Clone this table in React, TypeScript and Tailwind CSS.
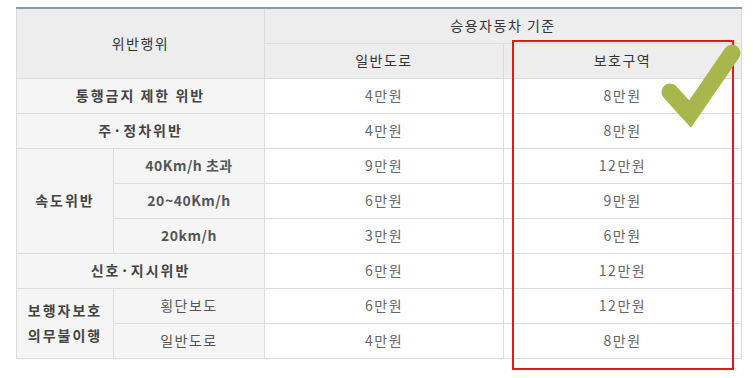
import React from "react";

const th = "border border-[#dcdcdc] bg-[#ededed] font-normal text-[#333]";
const label = "border border-[#dcdcdc] bg-[#f5f5f5] font-semibold tracking-[2px] text-[#444]";
const sub = "border border-[#dcdcdc] bg-[#f5f5f5] text-[#555]";
const val = "border border-[#dcdcdc] bg-white text-[14px] tracking-[1.5px] text-[#666]";

export default function App() {
  return (
    <div
      className="min-h-[378px] w-[753px] bg-white pl-4 pt-[7px] text-[14px] tracking-[1.5px]"
      style={{ fontFamily: '"Noto Sans CJK KR", "Noto Sans", sans-serif' }}
    >
      <div className="relative w-[725px]">
        <table className="w-full table-fixed border-collapse border-t-2 border-t-[#8a99ae] text-center">
          <colgroup>
            <col className="w-[97px]" />
            <col className="w-[151px]" />
            <col className="w-[239px]" />
            <col className="w-[238px]" />
          </colgroup>
          <thead>
            <tr className="h-[35px]">
              <th rowSpan={2} colSpan={2} className={th}>
                위반행위
              </th>
              <th colSpan={2} className={th}>
                승용자동차 기준
              </th>
            </tr>
            <tr className="h-[35px]">
              <th className={th}>일반도로</th>
              <th className={th}>보호구역</th>
            </tr>
          </thead>
          <tbody>
            <tr className="h-[35px]">
              <td colSpan={2} className={label}>통행금지 제한 위반</td>
              <td className={val}>4만원</td>
              <td className={val}>8만원</td>
            </tr>
            <tr className="h-[35px]">
              <td colSpan={2} className={label}>주·정차위반</td>
              <td className={val}>4만원</td>
              <td className={val}>8만원</td>
            </tr>
            <tr className="h-[35px]">
              <td rowSpan={3} className={label}>속도위반</td>
              <td className={`${sub} font-semibold tracking-[0.5px]`}>40Km/h 초과</td>
              <td className={val}>9만원</td>
              <td className={val}>12만원</td>
            </tr>
            <tr className="h-[35px]">
              <td className={`${sub} font-semibold tracking-[0.5px]`}>20~40Km/h</td>
              <td className={val}>6만원</td>
              <td className={val}>9만원</td>
            </tr>
            <tr className="h-[35px]">
              <td className={`${sub} font-semibold tracking-[0.5px]`}>20km/h</td>
              <td className={val}>3만원</td>
              <td className={val}>6만원</td>
            </tr>
            <tr className="h-[35px]">
              <td colSpan={2} className={label}>신호·지시위반</td>
              <td className={val}>6만원</td>
              <td className={val}>12만원</td>
            </tr>
            <tr className="h-[35px]">
              <td rowSpan={2} className={`${label} leading-[25px]`}>
                보행자보호
                <br />
                의무불이행
              </td>
              <td className={sub}>횡단보도</td>
              <td className={val}>6만원</td>
              <td className={val}>12만원</td>
            </tr>
            <tr className="h-[35px]">
              <td className={sub}>일반도로</td>
              <td className={val}>4만원</td>
              <td className={val}>8만원</td>
            </tr>
          </tbody>
        </table>

        <div className="pointer-events-none absolute left-[496px] top-[33px] h-[330px] w-[222px] border-2 border-[#e5161d]" />

        <svg
          className="pointer-events-none absolute left-[636px] top-[35px]"
          width="90"
          height="90"
          viewBox="0 0 90 90"
        >
          <polyline
            points="18,50 38,72 80,11"
            fill="none"
            stroke="#a8b64b"
            strokeWidth="17"
            strokeLinecap="round"
            strokeLinejoin="miter"
          />
        </svg>
      </div>
    </div>
  );
}
